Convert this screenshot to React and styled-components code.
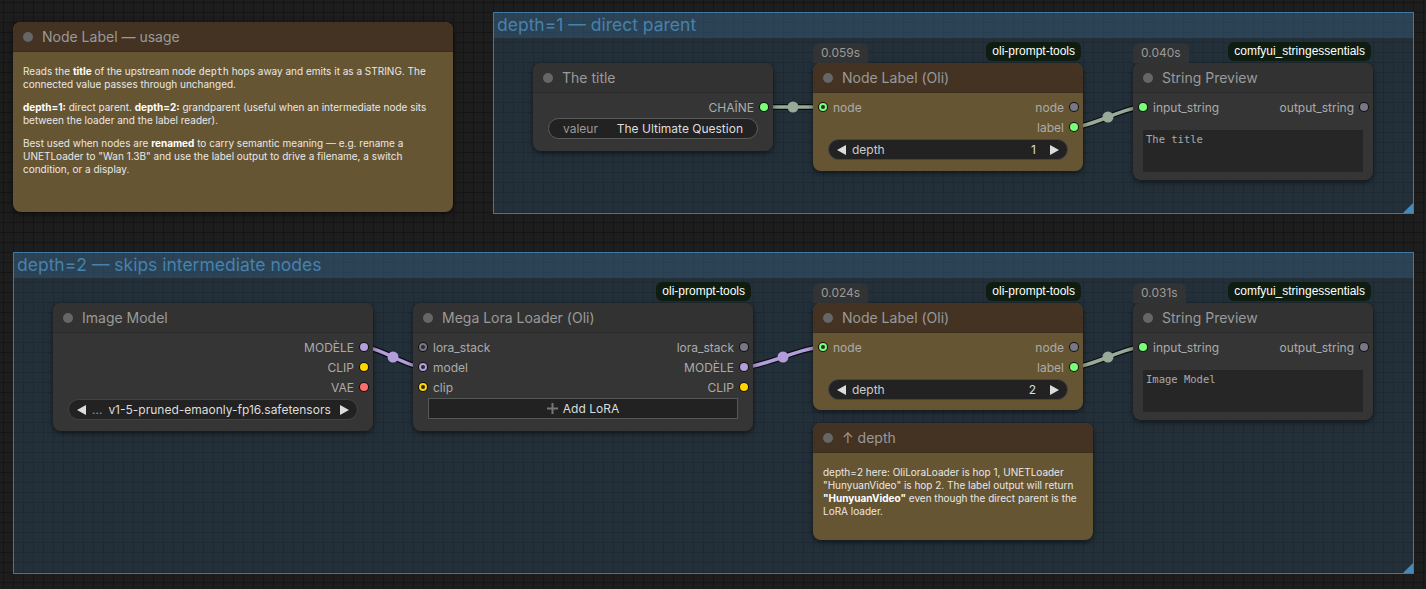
import React from "react";
import styled, { createGlobalStyle } from "styled-components";

/* ================= PAGE ================= */

const GlobalStyle = createGlobalStyle`
  html, body {
    margin: 0;
    padding: 0;
    background: #1d1d1d;
  }
  body {
    font-family: Inter, "Noto Sans", sans-serif;
  }
`;

const Canvas = styled.div`
  position: relative;
  width: 1426px;
  height: 589px;
  overflow: hidden;
  background-color: #1d1d1d;
  background-image: linear-gradient(to right, #151515 1px, transparent 1px),
    linear-gradient(to bottom, #151515 1px, transparent 1px);
  background-size: 10px 10px;
  background-position: 3px 2px;
`;

/* ================= GROUPS ================= */

const Group = styled.section`
  position: absolute;
  left: ${(p) => p.$x}px;
  top: ${(p) => p.$y}px;
  width: ${(p) => p.$w}px;
  height: ${(p) => p.$h}px;
  box-sizing: border-box;
  background: rgba(63, 120, 158, 0.22);
  border: 1px solid #4079a3;
`;

const GroupTitle = styled.h2`
  margin: 0;
  height: 25px;
  padding: 0 3px;
  line-height: 24px;
  font-size: 17.5px;
  font-weight: 400;
  color: #4682ae;
  background: rgba(63, 120, 158, 0.28);
`;

const GroupCorner = styled.span`
  position: absolute;
  right: 0;
  bottom: 0;
  width: 0;
  height: 0;
  border-style: solid;
  border-width: 0 0 10px 10px;
  border-color: transparent transparent #4a88b8 transparent;
`;

/* ================= LINKS ================= */

const LinkLayer = styled.svg`
  position: absolute;
  left: 0;
  top: 0;
  width: 1426px;
  height: 589px;
  pointer-events: none;
`;

/* ================= NODES ================= */

const Node = styled.div`
  position: absolute;
  left: ${(p) => p.$x}px;
  top: ${(p) => p.$y}px;
  width: ${(p) => p.$w}px;
  height: ${(p) => p.$h}px;
  box-sizing: border-box;
  display: flex;
  flex-direction: column;
  background: ${(p) => (p.$note ? "#665533" : "#353535")};
  border-radius: 8px;
  box-shadow: 0 2px 6px rgba(0, 0, 0, 0.55);
`;

const NodeTitle = styled.div`
  flex: none;
  height: 30px;
  box-sizing: border-box;
  display: flex;
  align-items: center;
  gap: 9px;
  padding-left: 10px;
  background: ${(p) => (p.$note ? "#443322" : "#323232")};
  border-bottom: 1px solid ${(p) => (p.$note ? "#3b2d1e" : "#2b2b2b")};
  border-radius: 8px 8px 0 0;
  color: #9a9a9a;
  font-size: 14px;
`;

const TitleDot = styled.span`
  width: 10px;
  height: 10px;
  border-radius: 50%;
  background: #666;
`;

const TimeBadge = styled.div`
  position: absolute;
  left: 0;
  bottom: 100%;
  height: 20px;
  padding: 0 8px;
  line-height: 20px;
  font-size: 12px;
  color: #9a9a9a;
  background: rgba(52, 52, 52, 0.9);
  border-radius: 6px 6px 0 0;
`;

const SourceBadge = styled.div`
  position: absolute;
  right: 2px;
  bottom: calc(100% + 2px);
  height: 19px;
  padding: 0 6px;
  line-height: 19px;
  font-family: "Liberation Sans", Arial, sans-serif;
  font-size: 12px;
  color: #fff;
  background: #0f1d10;
  border-radius: 6px;
`;

const Body = styled.div`
  padding-top: 4px;
  display: flex;
  flex-direction: column;
`;

const SlotRow = styled.div`
  height: 20px;
  display: flex;
  align-items: center;
  justify-content: space-between;
  padding: 0 5px 0 6px;
  font-size: 12px;
  color: #ababab;
`;

const Slot = styled.div`
  display: flex;
  align-items: center;
  gap: 6px;
`;

const Dot = styled.span`
  box-sizing: border-box;
  width: 8px;
  height: 8px;
  border-radius: 50%;
  background: ${(p) => (p.$hollow ? "#2a2a2a" : p.$color)};
  border: ${(p) => (p.$hollow ? `2px solid ${p.$color}` : "none")};
  box-shadow: 0 0 0 1px #111;
`;

const Pill = styled.div`
  margin: ${(p) => p.$mt || 1}px 15px 0;
  height: 21px;
  box-sizing: border-box;
  display: flex;
  align-items: center;
  gap: 6px;
  padding: 0 ${(p) => (p.$arrows ? 8 : 14)}px;
  background: #222;
  border: 1px solid ${(p) => (p.$arrows ? "#444" : "#5c5c5c")};
  border-radius: 11px;
  font-size: 12px;
  color: #ddd;
`;

const PillLabel = styled.span`
  color: ${(p) => p.$color || "#999"};
  flex: ${(p) => (p.$grow ? 1 : "none")};
`;

const PillValue = styled.span`
  color: #ddd;
  flex: ${(p) => (p.$grow ? 1 : "none")};
  text-align: ${(p) => p.$align || "right"};
  margin-right: ${(p) => p.$mr || 0}px;
  white-space: nowrap;
`;

const Preview = styled.div`
  margin: 13px 10px 0;
  height: 42px;
  box-sizing: border-box;
  padding: 3px 3px;
  background: #262626;
  font-family: "DejaVu Sans Mono", "Liberation Mono", monospace;
  font-size: 10.5px;
  color: #aaa;
`;

const AddButton = styled.div`
  margin: 1px 15px 0;
  height: 21px;
  box-sizing: border-box;
  display: flex;
  align-items: center;
  justify-content: center;
  gap: 5px;
  background: #222;
  border: 1px solid #575757;
  font-size: 12px;
  color: #ddd;
`;

const NoteBody = styled.div`
  padding: 13px 10px 11px;
  font-size: 10px;
  line-height: 13px;
  color: #e8e8e8;

  p {
    margin: 0 0 10px;
  }
  b {
    font-weight: 700;
    color: #fff;
  }
  code {
    font-family: "DejaVu Sans Mono", "Liberation Mono", monospace;
    font-size: 10px;
  }
`;

/* ================= ICONS ================= */

const Arrow = ({ dir }) => (
  <svg width="9" height="10" viewBox="0 0 9 10">
    <path d={dir === "left" ? "M9 0 L0 5 L9 10 Z" : "M0 0 L9 5 L0 10 Z"} fill="#ddd" />
  </svg>
);

const Plus = () => (
  <svg width="11" height="11" viewBox="0 0 11 11">
    <path d="M4.5 0h2v4.5H11v2H6.5V11h-2V6.5H0v-2h4.5z" fill="#777" />
  </svg>
);

/* ================= LINK DATA ================= */

const C = {
  str: "#99aa99",
  model: "#b39ddb",
  clip: "#ffd500",
  vae: "#ff6e6e",
  on: "#7f7",
  off: "#778",
};

const links = [
  { from: [764, 107], to: [822, 107], color: C.str },
  { from: [1074, 127], to: [1142, 107], color: C.str },
  { from: [364, 347], to: [422, 367], color: C.model },
  { from: [744, 367], to: [822, 347], color: C.model },
  { from: [1074, 367], to: [1142, 347], color: C.str },
];

const linkPath = ([x1, y1], [x2, y2]) => {
  const d = Math.hypot(x2 - x1, y2 - y1) * 0.25;
  return `M${x1} ${y1} C${x1 + d} ${y1} ${x2 - d} ${y2} ${x2} ${y2}`;
};

/* ================= PARTS ================= */

const Title = ({ children, note }) => (
  <NodeTitle $note={note}>
    <TitleDot />
    {children}
  </NodeTitle>
);

const Output = ({ label, color }) => (
  <Slot>
    {label}
    <Dot $color={color} />
  </Slot>
);

const Input = ({ label, color, hollow }) => (
  <Slot>
    <Dot $color={color} $hollow={hollow} />
    {label}
  </Slot>
);

const DepthWidget = ({ value }) => (
  <Pill $arrows $mt={2}>
    <Arrow dir="left" />
    <PillLabel $grow $color="#ccc">depth</PillLabel>
    <PillValue $mr={8}>{value}</PillValue>
    <Arrow dir="right" />
  </Pill>
);

const NodeLabel = ({ x, y, h, time, value }) => (
  <Node $x={x} $y={y} $w={270} $h={h} $note>
    <TimeBadge>{time}</TimeBadge>
    <SourceBadge>oli-prompt-tools</SourceBadge>
    <Title note>Node Label (Oli)</Title>
    <Body>
      <SlotRow>
        <Input label="node" color={C.on} hollow />
        <Output label="node" color={C.off} />
      </SlotRow>
      <SlotRow>
        <span />
        <Output label="label" color={C.on} />
      </SlotRow>
      <DepthWidget value={value} />
    </Body>
  </Node>
);

const StringPreview = ({ x, y, time, text }) => (
  <Node $x={x} $y={y} $w={240} $h={117}>
    <TimeBadge>{time}</TimeBadge>
    <SourceBadge>comfyui_stringessentials</SourceBadge>
    <Title>String Preview</Title>
    <Body>
      <SlotRow>
        <Input label="input_string" color={C.on} />
        <Output label="output_string" color={C.off} />
      </SlotRow>
      <Preview>{text}</Preview>
    </Body>
  </Node>
);

/* ================= COMPONENT ================= */

const App = () => {
  return (
    <>
      <GlobalStyle />
      <Canvas>
        <Group $x={493} $y={12} $w={921} $h={202}>
          <GroupTitle>depth=1 — direct parent</GroupTitle>
          <GroupCorner />
        </Group>

        <Group $x={13} $y={252} $w={1401} $h={322}>
          <GroupTitle>depth=2 — skips intermediate nodes</GroupTitle>
          <GroupCorner />
        </Group>

        <LinkLayer viewBox="0 0 1426 589">
          {links.map((l, i) => (
            <g key={i}>
              <path d={linkPath(l.from, l.to)} stroke="rgba(0,0,0,0.7)" strokeWidth="6" fill="none" />
              <path d={linkPath(l.from, l.to)} stroke={l.color} strokeWidth="3.5" fill="none" />
              <circle
                cx={(l.from[0] + l.to[0]) / 2}
                cy={(l.from[1] + l.to[1]) / 2}
                r="5.5"
                fill={l.color}
              />
            </g>
          ))}
        </LinkLayer>

        {/* NOTE: usage */}
        <Node $x={13} $y={22} $w={440} $h={190} $note>
          <Title note>Node Label — usage</Title>
          <NoteBody>
            <p>
              Reads the <b>title</b> of the upstream node <code>depth</code> hops away and emits it as a
              STRING. The connected value passes through unchanged.
            </p>
            <p>
              <b>depth=1:</b> direct parent. <b>depth=2:</b> grandparent (useful when an intermediate
              node sits between the loader and the label reader).
            </p>
            <p>
              Best used when nodes are <b>renamed</b> to carry semantic meaning — e.g. rename a
              UNETLoader to "Wan 1.3B" and use the label output to drive a filename, a switch
              condition, or a display.
            </p>
          </NoteBody>
        </Node>

        {/* GROUP 1 */}
        <Node $x={533} $y={63} $w={240} $h={88}>
          <Title>The title</Title>
          <Body>
            <SlotRow>
              <span />
              <Output label="CHAÎNE" color={C.on} />
            </SlotRow>
            <Pill>
              <PillLabel $grow>valeur</PillLabel>
              <PillValue>The Ultimate Question</PillValue>
            </Pill>
          </Body>
        </Node>

        <NodeLabel x={813} y={63} h={108} time="0.059s" value="1" />
        <StringPreview x={1133} y={63} time="0.040s" text="The title" />

        {/* GROUP 2 */}
        <Node $x={53} $y={303} $w={320} $h={128}>
          <Title>Image Model</Title>
          <Body>
            <SlotRow>
              <span />
              <Output label="MODÈLE" color={C.model} />
            </SlotRow>
            <SlotRow>
              <span />
              <Output label="CLIP" color={C.clip} />
            </SlotRow>
            <SlotRow>
              <span />
              <Output label="VAE" color={C.vae} />
            </SlotRow>
            <Pill $arrows $mt={2}>
              <Arrow dir="left" />
              <PillLabel>…</PillLabel>
              <PillValue $grow $align="left">v1-5-pruned-emaonly-fp16.safetensors</PillValue>
              <Arrow dir="right" />
            </Pill>
          </Body>
        </Node>

        <Node $x={413} $y={303} $w={340} $h={128}>
          <SourceBadge>oli-prompt-tools</SourceBadge>
          <Title>Mega Lora Loader (Oli)</Title>
          <Body>
            <SlotRow>
              <Input label="lora_stack" color={C.off} hollow />
              <Output label="lora_stack" color={C.off} />
            </SlotRow>
            <SlotRow>
              <Input label="model" color={C.model} hollow />
              <Output label="MODÈLE" color={C.model} />
            </SlotRow>
            <SlotRow>
              <Input label="clip" color={C.clip} hollow />
              <Output label="CLIP" color={C.clip} />
            </SlotRow>
            <AddButton>
              <Plus />
              Add LoRA
            </AddButton>
          </Body>
        </Node>

        <NodeLabel x={813} y={303} h={107} time="0.024s" value="2" />

        <Node $x={813} $y={423} $w={280} $h={117} $note>
          <Title note>↑ depth</Title>
          <NoteBody>
            <p>
              depth=2 here: OliLoraLoader is hop 1, UNETLoader "HunyuanVideo" is hop 2. The label
              output will return <b>"HunyuanVideo"</b> even though the direct parent is the LoRA
              loader.
            </p>
          </NoteBody>
        </Node>

        <StringPreview x={1133} y={303} time="0.031s" text="Image Model" />
      </Canvas>
    </>
  );
};

export default App;
